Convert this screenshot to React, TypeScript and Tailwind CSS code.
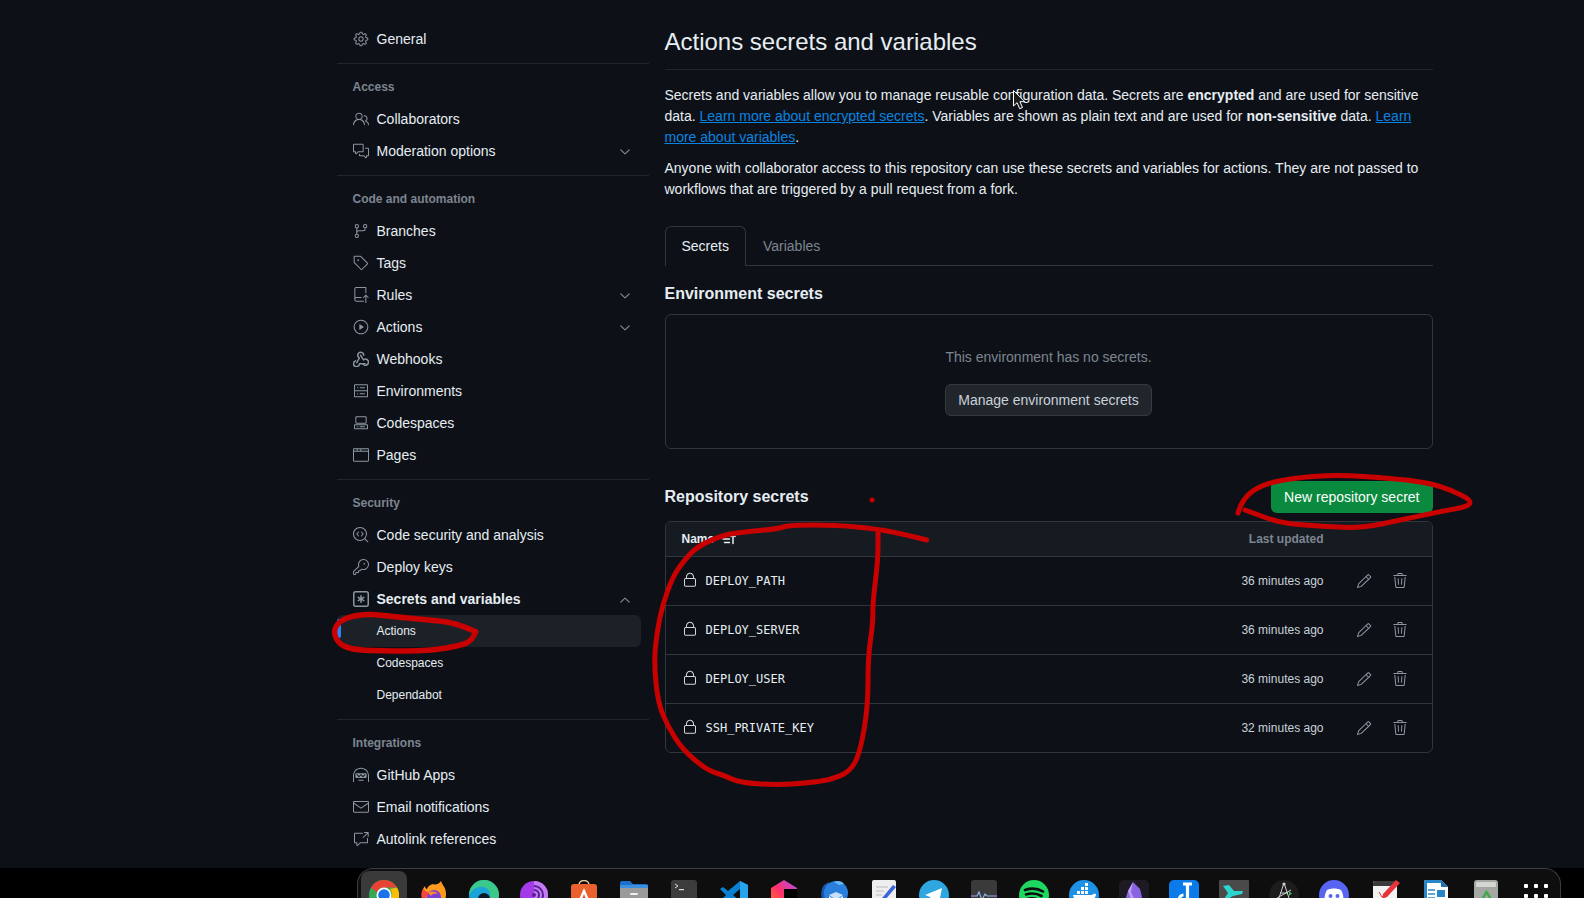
import type { ReactNode } from 'react'
import {
  GoBrowser,
  GoChevronDown,
  GoChevronUp,
  GoCodescan,
  GoCodespaces,
  GoCommentDiscussion,
  GoCrossReference,
  GoGear,
  GoGitBranch,
  GoHubot,
  GoKey,
  GoLock,
  GoMail,
  GoPencil,
  GoPeople,
  GoPlay,
  GoRepoPush,
  GoServer,
  GoTag,
  GoTrash,
} from 'react-icons/go'

type IconProps = { size?: number; className?: string }

function WebhookIcon({ size = 16, className }: IconProps) {
  return (
    <svg width={size} height={size} viewBox="0 0 16 16" fill="currentColor" className={className}>
      <path d="M5.5 4.25a2.25 2.25 0 0 1 4.5 0 .75.75 0 0 0 1.5 0 3.75 3.75 0 1 0-6.14 2.889l-2.272 4.258a.75.75 0 0 0 1.324.706L7 7.25a.75.75 0 0 0-.309-1.015A2.25 2.25 0 0 1 5.500 4.250Z" />
      <path d="M7.364 3.607a.75.75 0 0 1 1.020.294l2.249 3.997a3.75 3.75 0 1 1-.95 5.790.75.75 0 1 1 1.084-1.036 2.25 2.25 0 1 0 .178-3.240.75.75 0 0 1-1.118-.198L7.070 4.627a.75.75 0 0 1 .294-1.020Z" />
      <path d="M2.288 9.136a.75.75 0 0 1 .476 1.422 2.25 2.25 0 1 0 3.017 2.192.75.75 0 0 1 .75-.75h5.500a.75.75 0 0 1 0 1.500H7.144a3.751 3.751 0 1 1-4.856-4.364Z" />
    </svg>
  )
}

function KeyAsteriskIcon({ size = 16, className }: IconProps) {
  return (
    <svg width={size} height={size} viewBox="0 0 16 16" fill="currentColor" className={className}>
      <path d="M0 2.750A2.750 2.750 0 0 1 2.750 0h10.500A2.750 2.750 0 0 1 16 2.750v10.500A2.750 2.750 0 0 1 13.250 16H2.750A2.750 2.750 0 0 1 0 13.250ZM2.750 1.500c-.69 0-1.250.56-1.250 1.250v10.500c0 .69.56 1.250 1.250 1.250h10.500c.69 0 1.250-.56 1.250-1.250V2.750c0-.69-.56-1.250-1.250-1.250Z" />
      <path d="M8 4a.75.75 0 0 1 .75.75V6.700l1.690-.975a.75.75 0 0 1 .75 1.300L9.500 8l1.690.976a.75.75 0 0 1-.75 1.298L8.750 9.299v1.951a.75.75 0 0 1-1.500 0V9.300l-1.690.975a.75.75 0 0 1-.75-1.300L6.500 8l-1.690-.975a.75.75 0 0 1 .75-1.300l1.690.976V4.750A.75.75 0 0 1 8 4Z" />
    </svg>
  )
}

function SortIcon() {
  return (
    <svg width="16" height="16" viewBox="0 0 16 16" fill="none" stroke="currentColor" strokeWidth="1.500" strokeLinecap="round" strokeLinejoin="round">
      <path d="M1.500 4.500h8M3 8h6.500M4.500 11.500h5M13 12.500V3.500M11 5.500l2-2 2 2" />
    </svg>
  )
}

function NavRow({
  icon: Icon,
  label,
  chevron,
  bold,
}: {
  icon: (props: IconProps) => ReactNode
  label: string
  chevron?: 'up' | 'down'
  bold?: boolean
}) {
  return (
    <div className="mr-2 flex h-8 items-center gap-2 px-4 text-sm text-[#e6edf3]">
      <Icon size={16} className="shrink-0 text-[#8d96a0]" />
      <span className={bold ? 'flex-1 font-semibold' : 'flex-1'}>{label}</span>
      {chevron === 'down' && <GoChevronDown size={16} className="-mr-2 mt-[2px] text-[#8d96a0]" />}
      {chevron === 'up' && <GoChevronUp size={16} className="-mr-2 mt-[2px] text-[#8d96a0]" />}
    </div>
  )
}

function SubRow({ label, active }: { label: string; active?: boolean }) {
  return (
    <div
      className={
        active
          ? 'relative mr-2 flex h-8 items-center rounded-md bg-[#1c2128] pl-10 text-xs text-[#e6edf3]'
          : 'mr-2 flex h-8 items-center pl-10 text-xs text-[#e6edf3]'
      }
    >
      {active && <span className="absolute top-1 bottom-[9px] left-0 w-1 rounded-md bg-[#2f81f7]" />}
      {label}
    </div>
  )
}

function NavHeading({ children }: { children: ReactNode }) {
  return <div className="flex h-8 items-center px-4 text-xs font-semibold text-[#7d8590]">{children}</div>
}

function NavDivider() {
  return <div className="mt-2 mb-[7px] h-px bg-[#21262d]" />
}

function Sidebar() {
  return (
    <aside className="w-[312px] shrink-0 pt-[23px]">
      <NavRow icon={GoGear} label="General" />
      <NavDivider />
      <NavHeading>Access</NavHeading>
      <NavRow icon={GoPeople} label="Collaborators" />
      <NavRow icon={GoCommentDiscussion} label="Moderation options" chevron="down" />
      <NavDivider />
      <NavHeading>Code and automation</NavHeading>
      <NavRow icon={GoGitBranch} label="Branches" />
      <NavRow icon={GoTag} label="Tags" />
      <NavRow icon={GoRepoPush} label="Rules" chevron="down" />
      <NavRow icon={GoPlay} label="Actions" chevron="down" />
      <NavRow icon={WebhookIcon} label="Webhooks" />
      <NavRow icon={GoServer} label="Environments" />
      <NavRow icon={GoCodespaces} label="Codespaces" />
      <NavRow icon={GoBrowser} label="Pages" />
      <NavDivider />
      <NavHeading>Security</NavHeading>
      <NavRow icon={GoCodescan} label="Code security and analysis" />
      <NavRow icon={GoKey} label="Deploy keys" />
      <NavRow icon={KeyAsteriskIcon} label="Secrets and variables" chevron="up" bold />
      <SubRow label="Actions" active />
      <SubRow label="Codespaces" />
      <SubRow label="Dependabot" />
      <NavDivider />
      <NavHeading>Integrations</NavHeading>
      <NavRow icon={GoHubot} label="GitHub Apps" />
      <NavRow icon={GoMail} label="Email notifications" />
      <NavRow icon={GoCrossReference} label="Autolink references" />
    </aside>
  )
}

const secrets = [
  { name: 'DEPLOY_PATH', updated: '36 minutes ago' },
  { name: 'DEPLOY_SERVER', updated: '36 minutes ago' },
  { name: 'DEPLOY_USER', updated: '36 minutes ago' },
  { name: 'SSH_PRIVATE_KEY', updated: '32 minutes ago' },
]

function SecretRow({ name, updated }: { name: string; updated: string }) {
  return (
    <div className="flex h-[49px] items-center border-t border-[#30363d] pl-4">
      <GoLock size={16} className="-mt-[2px] shrink-0 text-[#d0d7de]" />
      <span className="ml-2 flex-1 font-['DejaVu_Sans_Mono',monospace] text-xs text-[#e6edf3]">{name}</span>
      <span className="text-xs text-[#c9d1d9]">{updated}</span>
      <div className="flex w-[108px] items-center gap-5 pl-[32px] text-[#8d96a0]">
        <GoPencil size={16} />
        <GoTrash size={16} />
      </div>
    </div>
  )
}

function Main() {
  return (
    <main className="ml-4 w-[768px] shrink-0 text-sm text-[#e6edf3]">
      <h1 className="mb-[15px] border-b border-[#21262d] pt-6 pb-[9px] text-2xl leading-9">
        Actions secrets and variables
      </h1>
      <p className="mb-[10px] leading-[21px]">
        Secrets and variables allow you to manage reusable configuration data. Secrets are{' '}
        <strong className="font-semibold">encrypted</strong> and are used for sensitive data.{' '}
        <a className="text-[#0a84e0] underline">Learn more about encrypted secrets</a>. Variables are shown as plain
        text and are used for <strong className="font-semibold">non-sensitive</strong> data.{' '}
        <a className="text-[#0a84e0] underline">Learn more about variables</a>.
      </p>
      <p className="leading-[21px]">
        Anyone with collaborator access to this repository can use these secrets and variables for actions. They are
        not passed to workflows that are triggered by a pull request from a fork.
      </p>

      <div className="mt-[26px] flex h-10 border-b border-[#30363d]">
        <div className="-mb-px flex items-center rounded-t-md border border-b-0 border-[#30363d] bg-[#0d1117] px-4 pb-[2px]">
          Secrets
        </div>
        <div className="flex items-center px-[17px] text-[#7d8590]">Variables</div>
      </div>

      <h2 className="mt-4 text-base leading-6 font-semibold">Environment secrets</h2>
      <div className="mt-2 flex h-[135px] flex-col items-center rounded-md border border-[#30363d] pt-8">
        <div className="leading-[21px] text-[#7d8590]">This environment has no secrets.</div>
        <button className="mt-4 h-8 rounded-md border border-[#363b42] bg-[#21262d] px-3 text-sm text-[#c9d1d9]">
          Manage environment secrets
        </button>
      </div>

      <div className="mt-8 flex h-8 items-center justify-between">
        <h2 className="text-base font-semibold">Repository secrets</h2>
        <button className="h-8 rounded-md bg-[#0a8a3e] px-[13px] text-sm text-white">New repository secret</button>
      </div>

      <div className="mt-2 overflow-hidden rounded-md border border-[#30363d]">
        <div className="flex h-[34px] items-center bg-[#161b22] pl-4 text-xs font-semibold">
          <span className="flex flex-1 items-center gap-[6px]">
            Name
            <SortIcon />
          </span>
          <span className="mr-[108px] text-[#7d8590]">Last updated</span>
        </div>
        {secrets.map((s) => (
          <SecretRow key={s.name} name={s.name} updated={s.updated} />
        ))}
      </div>
    </main>
  )
}

function DockItem({ children, active }: { children: ReactNode; active?: boolean }) {
  return (
    <div className="flex w-[50px] shrink-0 justify-center">
      <div
        className={
          active
            ? 'mt-[2px] flex h-10 w-[46px] justify-center rounded-t-lg bg-[#3a3a3a] pt-[9px]'
            : 'mt-[2px] flex h-10 w-[46px] justify-center pt-[9px]'
        }
      >
        <svg width="30" height="30" viewBox="0 0 30 30" className="shrink-0">
          {children}
        </svg>
      </div>
    </div>
  )
}

function Dock() {
  return (
    <div className="h-[30px] bg-black">
      <div className="ml-[357px] flex h-full w-[1204px] overflow-hidden rounded-t-2xl border-x border-t border-[#3d3d3d] bg-[#0e0e0e] pl-px">
        <DockItem active>
          <circle cx="15" cy="15" r="15" fill="#34a853" />
          <path d="M15 0a15 15 0 0 1 13 7.5H15a7.5 7.5 0 0 0-7 5L2 7.5A15 15 0 0 1 15 0Z" fill="#ea4335" />
          <path d="M28 7.5A15 15 0 0 1 15 30l6.500-11.500A7.500 7.500 0 0 0 21 9Z" fill="#fbbc04" />
          <circle cx="15" cy="15" r="7.500" fill="#fff" />
          <circle cx="15" cy="15" r="5.800" fill="#1a73e8" />
        </DockItem>
        <DockItem>
          <path d="M22 1c1 4 5 6 5 13a12 12 0 1 1-24 1c0-4 1-7 3-9 0 2 1 3 2 3 1-3 3-4 6-5 2 1 5 1 8-3Z" fill="#ff9a1f" />
          <path d="M4 9c-2 3-2 7-1 10s5 9 12 9c-6-2-9-8-7-12l5-3-5-1Z" fill="#f5463c" />
          <circle cx="15" cy="17" r="7" fill="#7b3fd4" />
          <path d="M9 13c3-2 8-2 10 1-3-1-6 0-7 2-1-1-2-2-3-3Z" fill="#ff8a2a" />
        </DockItem>
        <DockItem>
          <circle cx="15" cy="15" r="15" fill="#1ba4d8" />
          <path d="M15 0a15 15 0 0 1 15 15c0 3-2 5-6 5H15c5 0 6-2 6-5C21 9 16 6 10 7 5 8 2 11 0 15A15 15 0 0 1 15 0Z" fill="#3bc98a" />
          <circle cx="15" cy="19" r="6" fill="#0c1a2a" />
        </DockItem>
        <DockItem>
          <circle cx="15" cy="15" r="14" fill="#a23ae8" />
          <path d="M15 1A14 14 0 0 1 15 29Z" fill="#c27cf0" />
          <path d="M15 6a9 9 0 0 1 0 18M15 10a5 5 0 0 1 0 10" fill="none" stroke="#5a1d96" strokeWidth="2" />
          <circle cx="15" cy="15" r="2" fill="#5a1d96" />
        </DockItem>
        <DockItem>
          <path d="M10 5c0-6 10-6 10 0" fill="none" stroke="#e2c7a0" strokeWidth="1.500" />
          <rect x="2" y="4" width="26" height="26" rx="3" fill="#e9622d" />
          <path d="M15 8l-7 16h3l1.300-3h5.400l1.300 3h3Zm0 6l1.600 4h-3.200Z" fill="#fff" />
        </DockItem>
        <DockItem>
          <path d="M1 3a2 2 0 0 1 2-2h8l3 3h13a2 2 0 0 1 2 2v6H1Z" fill="#1c6fc9" />
          <rect x="1" y="6" width="28" height="22" rx="2" fill="#9a9a9a" />
          <rect x="1" y="5" width="28" height="3" fill="#3d8fe0" />
          <rect x="11" y="13" width="8" height="2" rx="1" fill="#eee" />
        </DockItem>
        <DockItem>
          <rect x="2" y="0" width="26" height="28" rx="3" fill="#3c3c3c" />
          <path d="M6 4l3 2-3 2" fill="none" stroke="#ddd" strokeWidth="1" />
          <rect x="10" y="9" width="5" height="1.200" fill="#ddd" />
        </DockItem>
        <DockItem>
          <path d="M21 1l8 4v20l-8 4-12-10-5 4-3-2 6-6-6-6 3-2 5 4Zm0 8l-7 6 7 6Z" fill="#0a80d0" />
          <path d="M21 1l8 4v20l-8 4Z" fill="#27a3ec" />
        </DockItem>
        <DockItem>
          <path d="M15 0l13 8v15L15 30H2V8Z" fill="url(#tb)" />
          <path d="M15 9h13v21H15Z" fill="#000" />
          <defs>
            <linearGradient id="tb" x1="0" y1="1" x2="1" y2="0">
              <stop offset="0" stopColor="#ff7a1a" />
              <stop offset="0.500" stopColor="#fe2f6c" />
              <stop offset="1" stopColor="#a855f7" />
            </linearGradient>
          </defs>
        </DockItem>
        <DockItem>
          <path d="M5 5c-4 6-4 14 2 20l6-12-3-11Z" fill="#1a56b0" />
          <circle cx="17" cy="13" r="12" fill="#2a7fdc" />
          <path d="M15 2c4-2 8-1 10 2l-5 1Z" fill="#6ab6f5" />
          <path d="M10 15l7-3 7 3-7 5Z" fill="#c9def8" />
          <path d="M10 16l7 5 7-5v8H10Z" fill="#eef5fd" />
        </DockItem>
        <DockItem>
          <rect x="3" y="0" width="24" height="30" rx="2" fill="#eeeeee" />
          <path d="M7 7h12M7 11h8M7 15h6M7 19h10" stroke="#bbb" strokeWidth="1.200" />
          <path d="M24 5l3 2-11 13-4 2 1-4Z" fill="#3a66d8" />
        </DockItem>
        <DockItem>
          <circle cx="15" cy="15" r="15" fill="#2ea6df" />
          <path d="M6 15L23 8l-3 15-5-4-3 3-1-5Z" fill="#fff" />
        </DockItem>
        <DockItem>
          <rect x="2" y="0" width="26" height="28" rx="3" fill="#3a3a3a" />
          <path d="M2 16h6l2-4 3 8 3-6 2 2h10" fill="none" stroke="#8fb0e8" strokeWidth="1.200" />
        </DockItem>
        <DockItem>
          <circle cx="15" cy="15" r="15" fill="#1ed760" />
          <path d="M6 10c6-2 13-1.500 18 1.500M7 14.500c5-1.500 11-1 15.500 1.500M8 19c4-1 9-.700 13 1.500" fill="none" stroke="#0d0d0d" strokeWidth="2.600" strokeLinecap="round" />
        </DockItem>
        <DockItem>
          <circle cx="15" cy="15" r="15" fill="#1d91e6" />
          <path d="M4 15h19c1-1 3-1.500 4-1 0 3-3 8-10 9-7 1-12-3-13-8Z" fill="#fff" />
          <path d="M8 11h3v3H8ZM12 11h3v3h-3ZM16 11h3v3h-3ZM12 7h3v3h-3ZM16 7h3v3h-3ZM16 3h3v3h-3Z" fill="#fff" />
        </DockItem>
        <DockItem>
          <rect x="0" y="0" width="30" height="30" rx="5" fill="#1d1a24" />
          <path d="M14 2l7 7 2 8-5 10H10L7 17l2-6Z" fill="#8a63e0" />
          <path d="M14 2l-2 10 3 6 3 9h-3L9 11Z" fill="#b8a0f2" />
        </DockItem>
        <DockItem>
          <rect x="0" y="0" width="30" height="30" rx="5" fill="#0a7be8" />
          <path d="M14 4h9M18.500 4v15a4 4 0 0 1-8 0 4 4 0 0 1 4-4" fill="none" stroke="#fff" strokeWidth="3.200" />
        </DockItem>
        <DockItem>
          <rect x="0" y="0" width="30" height="30" rx="1" fill="#4a4a4a" />
          <path d="M4 6l6-1 5 6h9l-1 3-9 2-5 3H5l4-6Z" fill="#2dd4d0" />
        </DockItem>
        <DockItem>
          <circle cx="15" cy="15" r="15" fill="#1c1c1c" />
          <path d="M15 3l-6 18M15 3l6 18M11 13h8M8 18l14-8" fill="none" stroke="#cfcfcf" strokeWidth="1" />
          <circle cx="15" cy="4" r="1.600" fill="#cfcfcf" />
          <path d="M20 11l3 2.500-3 2.500Z" fill="#3fae5a" />
        </DockItem>
        <DockItem>
          <circle cx="15" cy="15" r="15" fill="#5865f2" />
          <path d="M8 10c4-2 10-2 14 0 2 3 2.500 7 2.500 10-3 2.500-5 2.500-6 2.500l-1-2h-5l-1 2c-1 0-3 0-6-2.500C5.500 17 6 13 8 10Z" fill="#fff" />
          <circle cx="11.500" cy="16" r="2" fill="#5865f2" />
          <circle cx="18.500" cy="16" r="2" fill="#5865f2" />
        </DockItem>
        <div className="mx-px mt-[13px] h-[17px] w-px bg-[#3d3d3d]" />
        <DockItem>
          <rect x="2" y="1" width="24" height="28" rx="2" fill="#f2f2f2" />
          <path d="M2 3a2 2 0 0 1 2-2h22v5H2Z" fill="#3b3b3b" />
          <path d="M8 12l3 5 3-3" fill="none" stroke="#e03c3c" strokeWidth="1" />
          <path d="M25 0l4 3-13 14-5 2 1-5Z" fill="#e8333b" />
        </DockItem>
        <DockItem>
          <path d="M5 0h15l7 7v23H5a2 2 0 0 1-2-2V2a2 2 0 0 1 2-2Z" fill="#fff" />
          <path d="M20 0l7 7h-7Z" fill="#1a73b8" />
          <path d="M5 0h15v3H6v27H5a2 2 0 0 1-2-2V2a2 2 0 0 1 2-2Z" fill="#2686c8" />
          <path d="M7 10h7M7 14h7M7 18h7" stroke="#2686c8" strokeWidth="1.500" />
          <rect x="16" y="10" width="8" height="7" fill="#2686c8" />
        </DockItem>
        <DockItem>
          <rect x="3" y="0" width="24" height="30" rx="3" fill="#a4a7a2" />
          <rect x="5" y="2" width="20" height="5" rx="1" fill="#d4d6d1" />
          <path d="M15.500 12l6 10H9.500Z" fill="none" stroke="#3ba84a" strokeWidth="2.400" />
        </DockItem>
        <div className="grid h-fit w-[50px] shrink-0 grid-cols-3 justify-items-center gap-y-[6px] px-[10px] pt-[15px]">
          {Array.from({ length: 9 }).map((_, i) => (
            <span key={i} className="size-1 rounded-[1px] bg-white" />
          ))}
        </div>
      </div>
    </div>
  )
}

// turns the sampled marker strokes into a soft curve
function smooth(pts: number[][]) {
  let d = `M${pts[0][0]} ${pts[0][1]}`
  for (let i = 1; i < pts.length - 1; i++) {
    const mx = (pts[i][0] + pts[i + 1][0]) / 2
    const my = (pts[i][1] + pts[i + 1][1]) / 2
    d += ` Q${pts[i][0]} ${pts[i][1]} ${mx} ${my}`
  }
  const last = pts[pts.length - 1]
  return `${d} L${last[0]} ${last[1]}`
}

const actionsMark = [
  [475.7, 631.7], [456.7, 623], [430, 620], [396.7, 617], [370, 614], [352, 616], [340, 621], [333.5, 630],
  [337, 642], [350, 649.5], [380, 651], [430, 651], [463, 645], [471.7, 640], [475.7, 631.7],
]
const tableMark = [
  [926.7, 540], [903, 534], [876.7, 529], [836.7, 525], [790, 525], [776.7, 529], [746.7, 531.7], [723, 535],
  [696.7, 546.7], [683, 561.7], [673, 576.7], [663, 603], [656.7, 633], [654, 663], [658, 703], [668, 726.7],
  [683, 750], [706.7, 770], [723, 775], [740, 782.7], [776.7, 785], [806.7, 783], [830, 780], [850, 771.7],
  [860, 753], [868, 706.7], [868, 656.7], [873, 623], [872.7, 603], [878, 560], [878, 533],
]
const buttonMark = [
  [1238, 513], [1241.7, 500], [1260, 485], [1293, 478], [1333, 475], [1367, 476.7], [1407, 480], [1440, 485],
  [1480, 504], [1440, 511.7], [1400, 520], [1363, 528], [1323, 526.7], [1280, 523], [1245, 510],
]

function Annotations() {
  return (
    <svg className="pointer-events-none absolute inset-0" width="1584" height="898">
      <g fill="none" stroke="#c80000" strokeWidth="5" strokeLinecap="round" strokeLinejoin="round">
        <path d={smooth(actionsMark)} strokeWidth="5.500" />
        <path d={smooth(tableMark)} />
        <path d={smooth(buttonMark)} />
      </g>
      <circle cx="872" cy="500" r="2.500" fill="#c80000" />
      <path d="M1013.500 90.500v15.500l3.600-3.300 2.600 6 2.800-1.200-2.600-5.800h5Z" fill="#1c1c1c" stroke="#fff" strokeWidth="1" />
    </svg>
  )
}

export default function App() {
  return (
    <div className="relative flex h-[898px] flex-col overflow-hidden bg-[#0d1117] font-['Liberation_Sans',Arial,sans-serif]">
      <div className="flex h-[868px] pl-[336.5px]">
        <Sidebar />
        <Main />
      </div>
      <Dock />
      <Annotations />
    </div>
  )
}
